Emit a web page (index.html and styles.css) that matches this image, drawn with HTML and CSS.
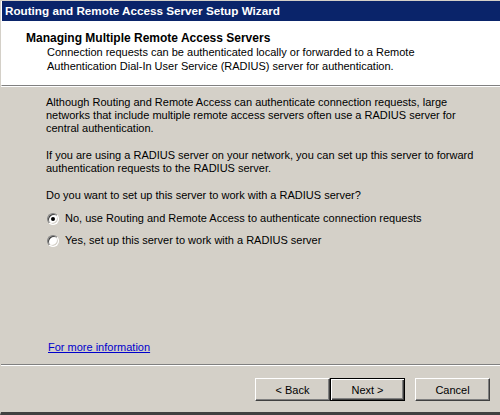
FILE: index.html
```html
<!DOCTYPE html>
<html>
<head>
<meta charset="utf-8">
<title>Routing and Remote Access Server Setup Wizard</title>
<link rel="stylesheet" href="styles.css">
</head>
<body>
<div class="window">
  <div class="titlebar">Routing and Remote Access Server Setup Wizard</div>
  <div class="header">
    <div class="header-title">Managing Multiple Remote Access Servers</div>
    <div class="header-sub">Connection requests can be authenticated locally or forwarded to a Remote<br>Authentication Dial-In User Service (RADIUS) server for authentication.</div>
  </div>
  <div class="content">
    <p class="para">Although Routing and Remote Access can authenticate connection requests, large<br>networks that include multiple remote access servers often use a RADIUS server for<br>central authentication.</p>
    <p class="para">If you are using a RADIUS server on your network, you can set up this server to forward<br>authentication requests to the RADIUS server.</p>
    <p class="para question">Do you want to set up this server to work with a RADIUS server?</p>
    <div class="options">
      <label class="option"><span class="radio checked"></span>No, use Routing and Remote Access to authenticate connection requests</label>
      <label class="option"><span class="radio"></span>Yes, set up this server to work with a RADIUS server</label>
    </div>
    <a class="more" href="#">For more information</a>
  </div>
  <div class="footer">
    <div class="btn-pair">
      <button class="btn">&lt; Back</button>
      <button class="btn default">Next &gt;</button>
    </div>
    <button class="btn">Cancel</button>
  </div>
</div>
</body>
</html>
```
FILE: styles.css
```css
html, body {
  margin: 0;
  padding: 0;
  background: #d4d0c8;
}

.window {
  width: 500px;
  height: 415px;
  box-sizing: border-box;
  border-top: 1px solid #d4d0c8;
  border-left: 1px solid #d4d0c8;
  border-bottom: 3px solid #404040;
  display: flex;
  flex-direction: column;
  font-family: "Liberation Sans", Arial, sans-serif;
  font-size: 11px;
  color: #000;
  overflow: hidden;
}

.titlebar {
  height: 20px;
  line-height: 20px;
  background: #0a246a;
  color: #fff;
  font-weight: bold;
  font-size: 11.7px;
  padding-left: 3px;
  border-left: 1px solid #fff;
  white-space: nowrap;
}

/* white banner with page title and description */
.header {
  height: 65px;
  background: #fff;
  border-left: 1px solid #fff;
  border-bottom: 1px solid #808080;
  box-shadow: 0 1px 0 #fff;
  padding: 11px 0 0 24px;
  box-sizing: border-box;
}

.header-title {
  font-weight: bold;
  font-size: 12px;
  line-height: 13px;
}

.header-sub {
  margin-left: 21px;
  line-height: 14px;
}

.content {
  height: 278px;
  margin-top: 1px;
  box-sizing: border-box;
  padding: 9px 0 10px 45px;
  display: flex;
  flex-direction: column;
  align-items: flex-start;
  border-bottom: 1px solid #808080;
  box-shadow: 0 1px 0 #fff;
}

.para {
  margin: 0 0 14px 0;
  line-height: 13px;
}

.para.question {
  margin-bottom: 10px;
}

.options {
  display: flex;
  flex-direction: column;
  gap: 9px;
  margin-left: 1px;
}

.option {
  display: flex;
  align-items: center;
  height: 13px;
  line-height: 13px;
}

.radio {
  width: 12px;
  height: 12px;
  box-sizing: border-box;
  border-radius: 50%;
  background: #fff;
  border: 1px solid;
  border-color: #808080 #fff #fff #808080;
  box-shadow: inset 1px 1px 0 #404040, inset -1px -1px 0 #d4d0c8;
  margin-right: 6px;
  position: relative;
  flex: none;
}

.radio.checked::after {
  content: "";
  position: absolute;
  left: 3px;
  top: 3px;
  width: 4px;
  height: 4px;
  border-radius: 50%;
  background: #000;
}

.more {
  margin-top: auto;
  margin-left: 2px;
  color: #0000cc;
  line-height: 13px;
}

.footer {
  flex: 1;
  display: flex;
  justify-content: flex-end;
  align-items: flex-start;
  padding: 13px 10px 0 0;
  gap: 10px;
}

.btn-pair {
  display: flex;
}

.btn {
  width: 75px;
  height: 23px;
  box-sizing: border-box;
  background: #d4d0c8;
  font-family: "Liberation Sans", Arial, sans-serif;
  font-size: 11px;
  color: #000;
  border: 1px solid;
  border-color: #fff #404040 #404040 #fff;
  box-shadow: inset -1px -1px 0 #808080;
  padding: 0;
  margin: 0;
}

.btn.default {
  border: 1px solid #000;
  box-shadow: inset 1px 1px 0 #fff, inset -1px -1px 0 #404040, inset -2px -2px 0 #808080;
}
```
